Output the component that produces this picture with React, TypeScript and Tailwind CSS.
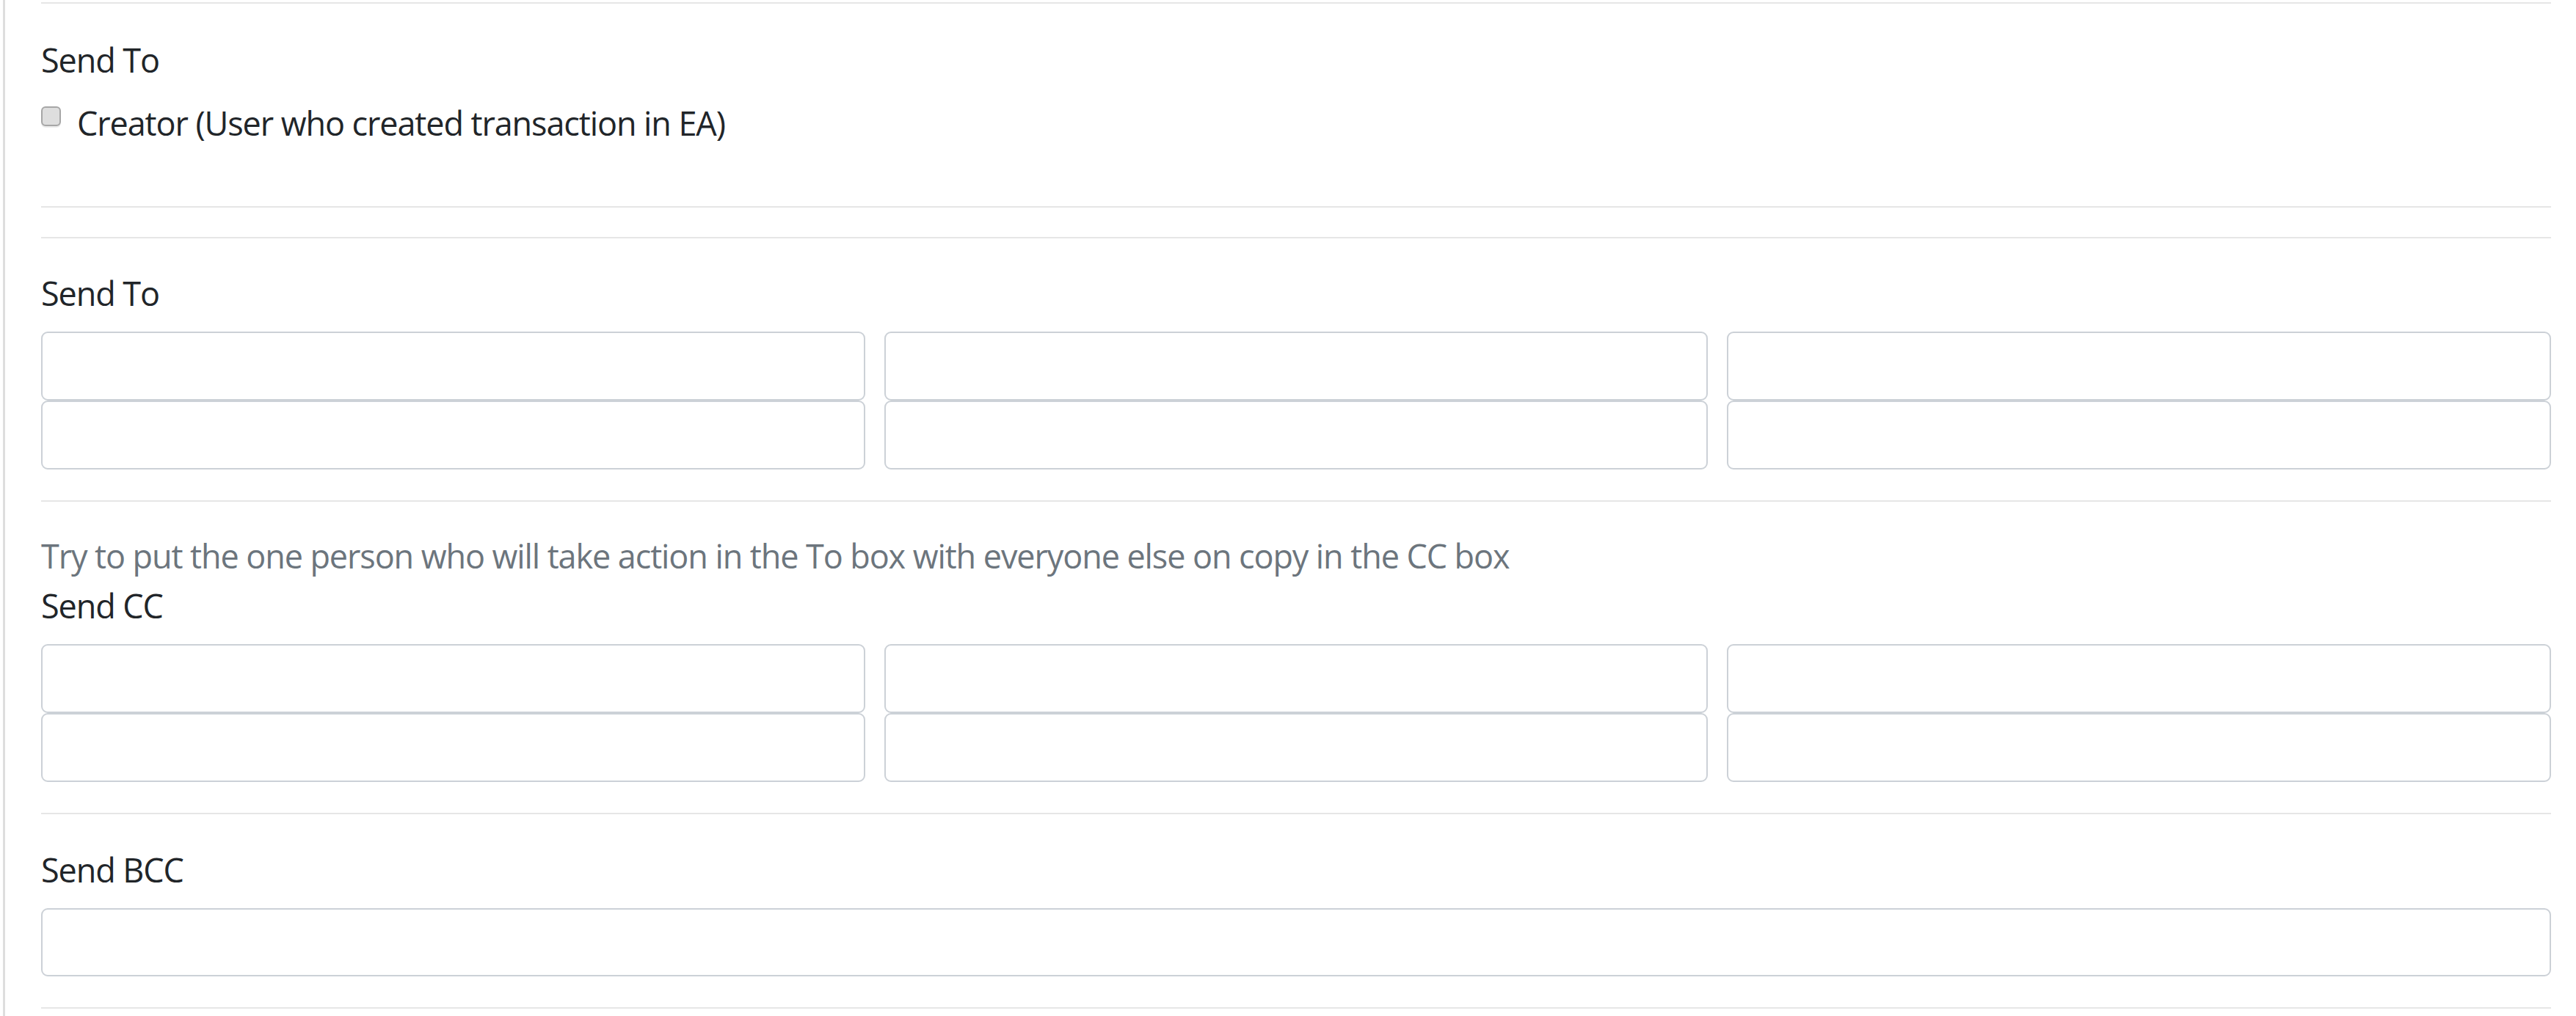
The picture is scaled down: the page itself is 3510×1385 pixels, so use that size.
import React from 'react';

const font = { fontFamily: '"Open Sans", "Noto Sans", "Liberation Sans", sans-serif' };

const Divider = ({ className = '' }: { className?: string }) => (
  <hr className={`border-0 h-[2px] bg-[#e6e6e6] ${className}`} />
);

const Field = () => (
  <input
    type="text"
    className="block w-full h-[94px] rounded-[9px] border-2 border-[#ccd1d7] bg-white outline-none"
  />
);

const FieldGrid = ({ count }: { count: number }) => (
  <div className="grid grid-cols-3 gap-x-[26px] mt-[19px]">
    {Array.from({ length: count }).map((_, i) => (
      <Field key={i} />
    ))}
  </div>
);

const Label = ({ children }: { children: React.ReactNode }) => (
  <div className="pt-[2px] text-[45px] leading-[67px] tracking-[-1.1px] text-[#212529]">{children}</div>
);

export default function App() {
  return (
    <div className="min-h-[1385px] bg-white pl-[4px]" style={font}>
      <div className="min-h-[1385px] border-l-[3px] border-[#dedede] pl-[49px] pr-[34px] pt-[3px]">
        <Divider />

        {/* Creator checkbox section */}
        <div className="pt-[41px]">
          <Label>Send To</Label>
          <label className="mt-[17px] pt-[2px] flex items-start gap-[22px] text-[45px] leading-[67px] tracking-[-1.1px] text-[#212529]">
            <input
              type="checkbox"
              className="mt-[11px] appearance-none w-[27px] h-[27px] rounded-[6px] border-2 border-[#a6a6a6] bg-[#dedede] shadow-[0_2px_0_#ececec] shrink-0"
            />
            <span>Creator (User who created transaction in EA)</span>
          </label>
        </div>

        <Divider className="mt-[80px]" />
        <Divider className="mt-[40px]" />

        {/* Send To */}
        <div className="pt-[39px]">
          <Label>Send To</Label>
          <FieldGrid count={6} />
        </div>

        <Divider className="mt-[42px]" />

        {/* Send CC */}
        <div className="pt-[39px]">
          <div className="pt-[2px] text-[45px] leading-[65px] tracking-[-1.1px] text-[#6c757d]">
            Try to put the one person who will take action in the To box with everyone else on copy in the CC box
          </div>
          <Label>Send CC</Label>
          <FieldGrid count={6} />
        </div>

        <Divider className="mt-[42px]" />

        {/* Send BCC */}
        <div className="pt-[40px]">
          <Label>Send BCC</Label>
          <div className="mt-[19px]">
            <input
              type="text"
              className="block w-full h-[93px] rounded-[9px] border-2 border-[#ccd1d7] bg-white outline-none"
            />
          </div>
        </div>

        <Divider className="mt-[42px]" />
      </div>
    </div>
  );
}
